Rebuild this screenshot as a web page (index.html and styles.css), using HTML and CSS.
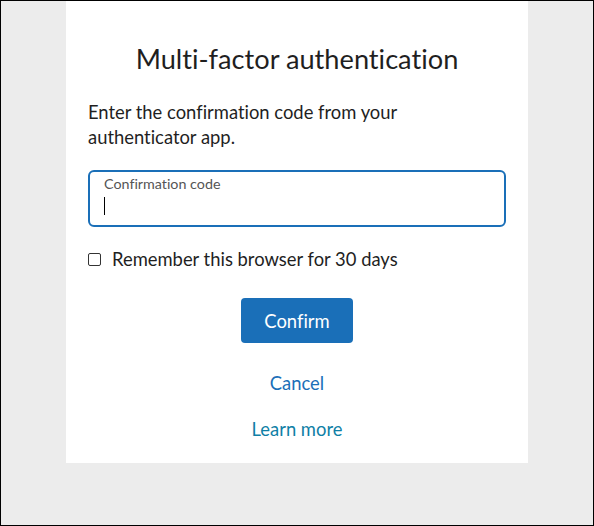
FILE: index.html
```html
<!DOCTYPE html>
<html>
<head>
<meta charset="utf-8">
<link rel="stylesheet" href="styles.css">
</head>
<body>
<div class="frame">
  <main class="card">
    <h1 class="title">Multi-factor authentication</h1>
    <p class="intro">Enter the confirmation code from your authenticator app.</p>
    <label class="field">
      <span class="field-label">Confirmation code</span>
      <span class="field-input"><span class="caret"></span></span>
    </label>
    <label class="remember">
      <span class="box"></span>
      <span>Remember this browser for 30 days</span>
    </label>
    <div class="actions">
      <button class="btn">Confirm</button>
      <a class="link cancel" href="#">Cancel</a>
      <a class="link learn" href="#">Learn more</a>
    </div>
  </main>
</div>
</body>
</html>
```

FILE: styles.css
```css
* { box-sizing: border-box; }
html, body { margin: 0; padding: 0; }
body {
  width: 594px;
  height: 526px;
  font-family: Lato, "Open Sans", sans-serif;
  font-variant-ligatures: none;
  color: #1f1f1f;
}
.frame {
  width: 594px;
  height: 526px;
  border: 1px solid #000;
  background: #ececec;
  padding-left: 65px;
}
.card {
  width: 462px;
  height: 462px;
  background: #fff;
  padding: 40px 22px 0 22px;
}
.title {
  margin: 0;
  font-weight: 400;
  font-size: 27.2px;
  line-height: 36px;
  text-align: center;
  color: #1f1f1f;
}
.intro {
  margin: 23px 0 0 0;
  max-width: 400px;
  font-size: 18.4px;
  line-height: 25px;
}
.field {
  display: block;
  margin-top: 20px;
  height: 57px;
  border: 2px solid #1a6fb8;
  border-radius: 6px;
  padding: 3px 0 0 14px;
}
.field-label {
  display: block;
  font-size: 14.3px;
  line-height: 18px;
  color: #555;
}
.field-input { display: block; height: 22px; padding-top: 4px; }
.caret {
  display: block;
  width: 1px;
  height: 18px;
  background: #000;
}
.remember {
  display: flex;
  align-items: center;
  gap: 11px;
  margin-top: 20px;
  font-size: 18.4px;
  line-height: 24px;
}
.box {
  width: 13px;
  height: 13px;
  border: 1px solid #333;
  border-radius: 2px;
  background: #fff;
}
.actions {
  display: flex;
  flex-direction: column;
  align-items: center;
  margin-top: 27px;
}
.btn {
  width: 112px;
  height: 45px;
  border: none;
  border-radius: 4px;
  background: #1a6fb8;
  color: #fff;
  font-family: inherit;
  font-variant-ligatures: none;
  font-size: 18.4px;
}
.link {
  text-decoration: none;
  font-size: 18.4px;
  line-height: 24px;
}
.cancel { color: #1a6fb8; margin-top: 28px; }
.learn { color: #0f7fa6; margin-top: 22px; }
```
